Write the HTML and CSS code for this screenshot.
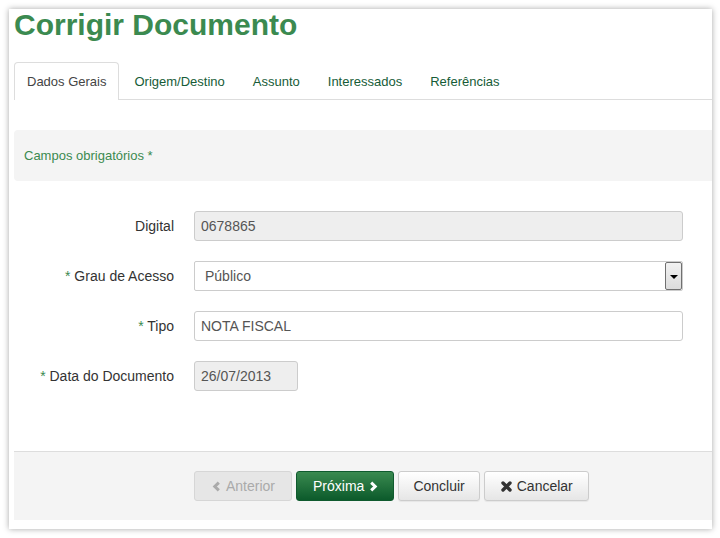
FILE: index.html
```html
<!DOCTYPE html>
<html lang="pt">
<head>
<meta charset="utf-8">
<title>Corrigir Documento</title>
<link rel="stylesheet" href="styles.css">
</head>
<body>
<div class="panel">
  <h1 class="title">Corrigir Documento</h1>
  <ul class="tabs">
    <li class="tab active"><a>Dados Gerais</a></li>
    <li class="tab"><a>Origem/Destino</a></li>
    <li class="tab"><a>Assunto</a></li>
    <li class="tab"><a>Interessados</a></li>
    <li class="tab"><a>Referências</a></li>
  </ul>
  <div class="notice">Campos obrigatórios *</div>
  <div class="form">
    <label class="label">Digital</label>
    <div class="field"><div class="input disabled">0678865</div></div>
    <label class="label"><span class="req">*</span> Grau de Acesso</label>
    <div class="field">
      <div class="input select">Público<span class="drop"><span class="arrow"></span></span></div>
    </div>
    <label class="label"><span class="req">*</span> Tipo</label>
    <div class="field"><div class="input">NOTA FISCAL</div></div>
    <label class="label"><span class="req">*</span> Data do Documento</label>
    <div class="field"><div class="input disabled date">26/07/2013</div></div>
  </div>
  <div class="footer">
    <button class="btn btn-disabled"><svg class="ico" width="9" height="11" viewBox="0 0 9 11"><polyline points="6.8,1.6 2.8,5.5 6.8,9.4" fill="none" stroke="currentColor" stroke-width="3"/></svg>Anterior</button>
    <button class="btn btn-primary">Próxima<svg class="ico" width="9" height="11" viewBox="0 0 9 11"><polyline points="2.2,1.6 6.2,5.5 2.2,9.4" fill="none" stroke="currentColor" stroke-width="3"/></svg></button>
    <button class="btn btn-default btn-concluir">Concluir</button>
    <button class="btn btn-default btn-cancel"><svg class="ico" width="11" height="11" viewBox="0 0 11 11"><path d="M2 2 L9 9 M9 2 L2 9" stroke="currentColor" stroke-width="3.4" stroke-linecap="round"/></svg>Cancelar</button>
  </div>
</div>
</body>
</html>
```
FILE: styles.css
```css
html, body {
  margin: 0;
  padding: 0;
  background: #fff;
}
body {
  padding: 9px 8px 8px 9px;
  font-family: "Liberation Sans", Arial, sans-serif;
  color: #333;
}
.panel {
  width: 698px;
  padding: 0 0 9px 5px;
  background: #fff;
  box-shadow: 0 0 6px rgba(0, 0, 0, 0.35);
}
.title {
  margin: 0;
  font-size: 30px;
  line-height: 32px;
  font-weight: bold;
  color: #3b8a50;
}
.tabs {
  list-style: none;
  margin: 21px 0 0;
  padding: 0;
  display: flex;
  border-bottom: 1px solid #ddd;
  height: 37px;
}
.tab {
  margin-right: 2px;
  margin-bottom: -1px;
}
.tab a {
  display: block;
  box-sizing: border-box;
  padding: 1px 12px 0;
  height: 37px;
  line-height: 36px;
  font-size: 13px;
  color: #165c37;
  border: 1px solid transparent;
  border-bottom: 0;
  border-radius: 4px 4px 0 0;
}
.tab.active a {
  color: #444;
  border-color: #ddd;
  background: #fff;
  height: 38px;
}
.notice {
  margin-top: 30px;
  height: 51px;
  line-height: 51px;
  padding: 0 10px;
  background: #f4f4f4;
  border-radius: 4px 0 0 4px;
  color: #3b8a50;
  font-size: 13px;
}
.form {
  margin-top: 30px;
  display: grid;
  grid-template-columns: 160px 489px;
  column-gap: 20px;
  row-gap: 20px;
}
.label {
  text-align: right;
  font-size: 14px;
  line-height: 30px;
  color: #333;
}
.req {
  color: #3b8a50;
}
.input {
  position: relative;
  box-sizing: border-box;
  height: 30px;
  line-height: 28px;
  padding: 0 6px;
  border: 1px solid #ccc;
  border-radius: 3px;
  font-size: 14px;
  color: #555;
  background: #fff;
}
.input.disabled {
  background: #eee;
}
.input.date {
  width: 104px;
}
.input.select {
  padding-left: 10px;
  border-radius: 2px;
}
.drop {
  position: absolute;
  right: 0;
  top: 0;
  width: 17px;
  height: 28px;
  box-sizing: border-box;
  border: 1px solid #707070;
  border-radius: 2px;
  background: linear-gradient(#f2f2f2, #dcdcdc);
  display: flex;
  align-items: center;
  justify-content: center;
}
.arrow {
  width: 0;
  height: 0;
  border-left: 4px solid transparent;
  border-right: 4px solid transparent;
  border-top: 4px solid #000;
  margin-top: 1px;
}
.footer {
  margin-top: 60px;
  border-top: 1px solid #ddd;
  background: #f4f4f4;
  padding: 19px 0 19px 180px;
  display: flex;
  gap: 4px;
}
.btn {
  box-sizing: border-box;
  height: 30px;
  padding: 0 15px;
  display: inline-flex;
  align-items: center;
  gap: 5px;
  font-family: "Liberation Sans", Arial, sans-serif;
  font-size: 14px;
  border: 1px solid #ccc;
  border-radius: 3px;
  cursor: pointer;
}
.btn-default {
  color: #333;
  background: linear-gradient(#fff, #e6e6e6);
  box-shadow: 0 1px 1px rgba(0, 0, 0, 0.06);
}
.btn-concluir {
  padding: 0 14px;
}
.btn-cancel {
  padding: 0 15px 0 16px;
}
.btn-primary {
  color: #fff;
  border-color: #0f5a2e;
  background: linear-gradient(#3a8a50, #0c5a2b);
  padding: 0 15px 0 16px;
  gap: 5px;
}
.btn-disabled {
  color: #aaa;
  background: #e6e6e6;
  border-color: #d6d6d6;
  padding: 0 16px 0 17px;
  gap: 5px;
}
.ico {
  display: block;
}
```
